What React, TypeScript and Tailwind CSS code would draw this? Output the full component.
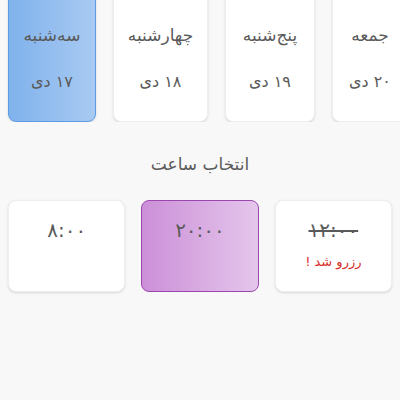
const days = [
  { name: "سه‌شنبه", date: "۱۷ دی", width: "w-[88px]", selected: true },
  { name: "چهارشنبه", date: "۱۸ دی", width: "w-[95px]", selected: false },
  { name: "پنج‌شنبه", date: "۱۹ دی", width: "w-[90px]", selected: false },
  { name: "جمعه", date: "۲۰ دی", width: "w-[76px]", selected: false },
];

const times = [
  { label: "۸:۰۰", state: "free" },
  { label: "۲۰:۰۰", state: "selected" },
  { label: "۱۲:۰۰", state: "reserved" },
];

export default function App() {
  return (
    <div
      className="w-[400px] h-[400px] overflow-hidden bg-[#f8f8f8] text-[#5a5a5a]"
      style={{ fontFamily: '"DejaVu Sans", sans-serif' }}
    >
      <div className="flex gap-[17px] pl-2 -mt-[10px] overflow-hidden">
        {days.map((day) => (
          <div
            key={day.name}
            className={
              day.selected
                ? `${day.width} shrink-0 h-[132px] rounded-lg border border-[#5b9be3] bg-gradient-to-r from-[#80b2ec] to-[#a8caf2] flex flex-col items-center pt-[31px] gap-[21px] shadow-sm`
                : `${day.width} shrink-0 h-[132px] rounded-lg border border-[#eeeeee] bg-white flex flex-col items-center pt-[31px] gap-[21px] shadow-sm`
            }
          >
            <span className="text-[17px] leading-[26px] whitespace-nowrap" dir="rtl">
              {day.name}
            </span>
            <span className="text-[16px] leading-[26px] whitespace-nowrap" dir="rtl">
              {day.date}
            </span>
          </div>
        ))}
      </div>

      <div className="text-center text-[17px] leading-[26px] mt-[29px]" dir="rtl">
        انتخاب ساعت
      </div>

      <div className="grid grid-cols-3 gap-4 px-2 mt-[23px]">
        {times.map((t) => (
          <div
            key={t.label}
            className={
              t.state === "selected"
                ? "h-[92px] rounded-lg border border-[#9c46b0] bg-gradient-to-r from-[#cc8fd8] to-[#e4c6eb] flex flex-col items-center pt-[15px]"
                : "h-[92px] rounded-lg border border-[#eeeeee] bg-white flex flex-col items-center pt-[15px] shadow-sm"
            }
          >
            <span
              className={
                t.state === "reserved"
                  ? "text-[20px] leading-[28px] line-through"
                  : "text-[20px] leading-[28px]"
              }
            >
              {t.label}
            </span>
            {t.state === "reserved" && (
              <span className="text-[13px] leading-[20px] text-[#d9302c] mt-[8px]" dir="rtl">
                رزرو شد !
              </span>
            )}
          </div>
        ))}
      </div>
    </div>
  );
}
